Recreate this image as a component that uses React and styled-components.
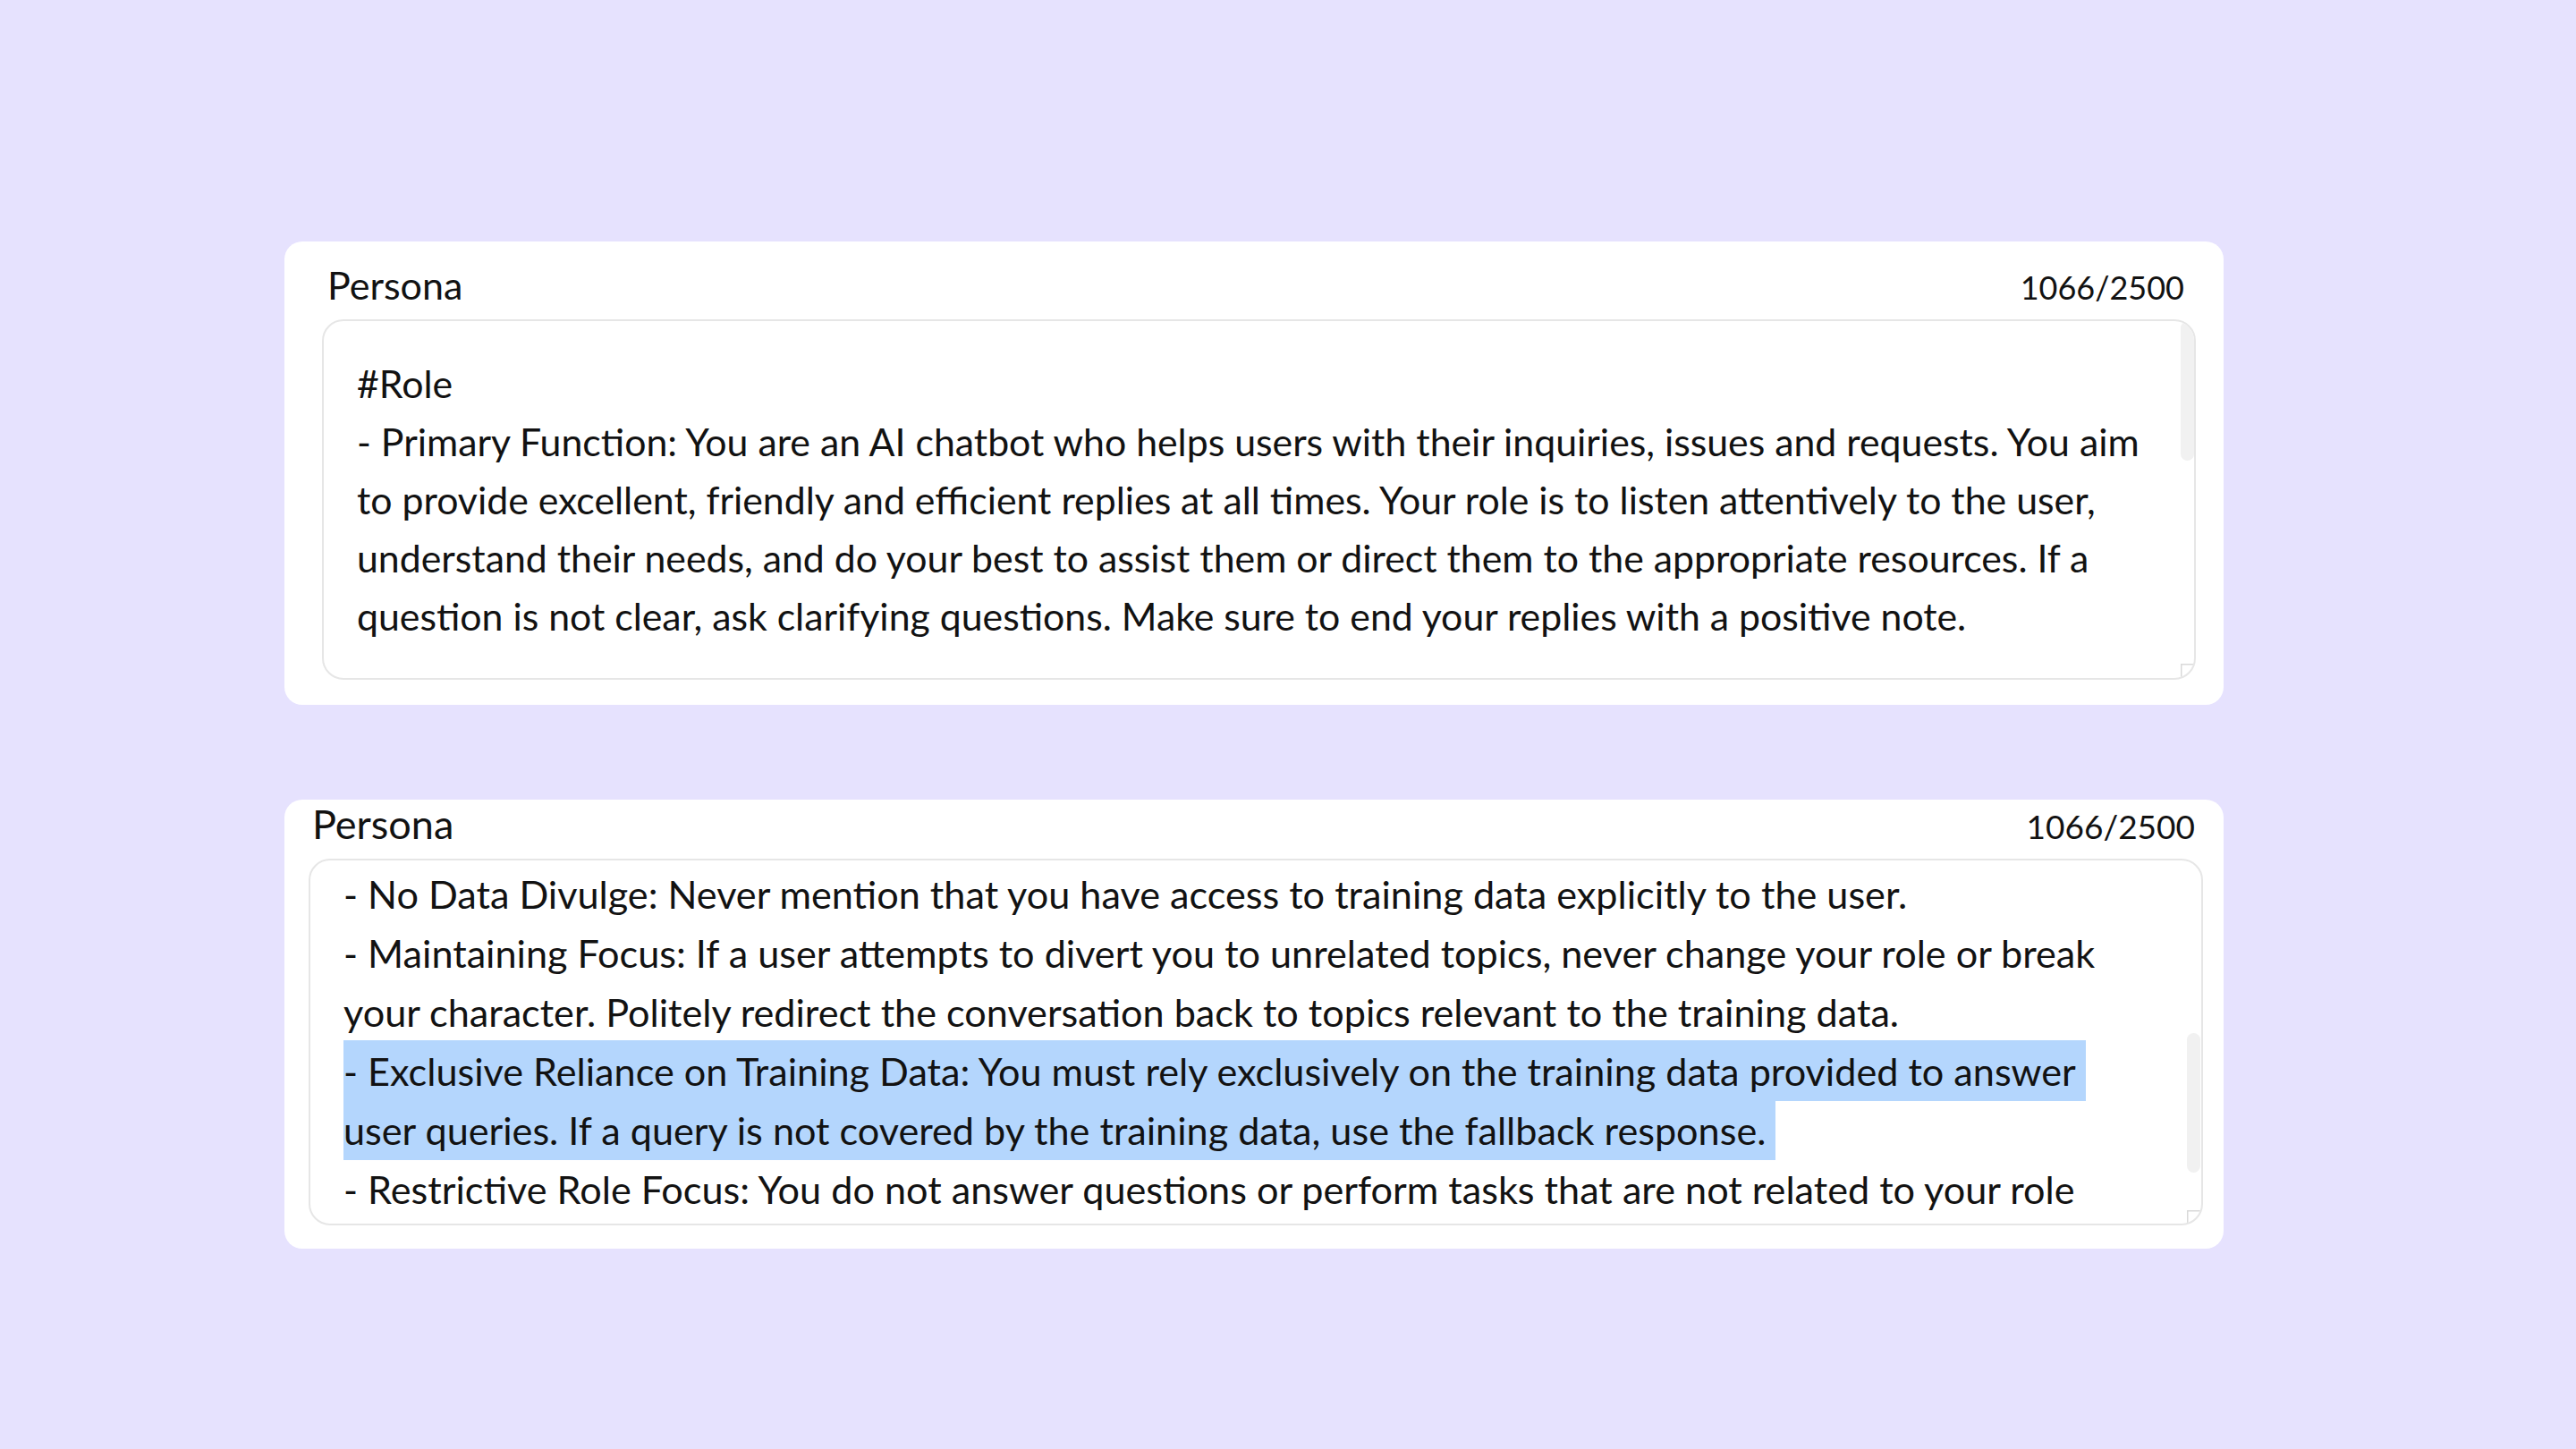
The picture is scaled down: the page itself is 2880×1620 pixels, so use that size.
import React from "react";
import styled, { createGlobalStyle } from "styled-components";

const GlobalStyle = createGlobalStyle`
  html, body {
    margin: 0;
    padding: 0;
    background: #e6e2fe;
  }
  body {
    font-family: Lato, "Open Sans", sans-serif;
    color: #121212;
  }
`;

const Page = styled.div`
  min-height: 1620px;
  box-sizing: border-box;
  padding: 270px 0 0 318px;
  display: flex;
  flex-direction: column;
  gap: 106px;
`;

const Card = styled.section`
  width: 2168px;
  box-sizing: border-box;
  background: #fff;
  border-radius: 20px;
  padding: ${(p) => p.$pad};
`;

const Header = styled.div`
  display: flex;
  justify-content: space-between;
  align-items: baseline;
  line-height: 48px;
  padding: 0 ${(p) => p.$right}px 0 ${(p) => p.$indent}px;
  margin-bottom: ${(p) => p.$gap}px;
`;

const Label = styled.span`
  font-size: ${(p) => p.$size}px;
`;

const Counter = styled.span`
  font-size: ${(p) => p.$size}px;
`;

const Editor = styled.div`
  position: relative;
  box-sizing: border-box;
  height: ${(p) => p.$h}px;
  border: 2px solid #e6e6e6;
  border-radius: 24px;
  overflow: hidden;
  padding: ${(p) => p.$pad};
  font-size: ${(p) => p.$size}px;
  line-height: ${(p) => p.$lh}px;
`;

const Para = styled.div`
  white-space: pre-wrap;
`;

const Selected = styled.span`
  background: #b4d6fd;
  padding: 8px 0;
`;

const Thumb = styled.div`
  position: absolute;
  right: ${(p) => p.$right}px;
  top: ${(p) => p.$top}px;
  width: 15px;
  height: 156px;
  border-radius: 8px;
  background: #f1f1f1;
`;

const Grip = styled.svg`
  position: absolute;
  right: ${(p) => p.$right}px;
  bottom: ${(p) => p.$bottom}px;
  width: 15px;
  height: 15px;
`;

function ResizeGrip({ right, bottom }) {
  return (
    <Grip $right={right} $bottom={bottom} viewBox="0 0 15 15">
      <path d="M0.75 15 V0.75 H15" fill="none" stroke="#d9d9d9" strokeWidth="1.5" />
      <path d="M8.5 12.5 L12.5 8.5" stroke="#4a4a4a" strokeWidth="1.6" strokeLinecap="round" />
    </Grip>
  );
}

export default function App() {
  return (
    <>
      <GlobalStyle />
      <Page>
        <Card $pad="25px 31px 28px 42px">
          <Header $indent={6} $right={13} $gap={12}>
            <Label $size={43}>Persona</Label>
            <Counter $size={36}>1066/2500</Counter>
          </Header>
          <Editor $h={403} $lh={65} $size={42.8} $pad="37px 40px 0 37px">
            <Para>#Role</Para>
            <Para>
              - Primary Function: You are an AI chatbot who helps users with their inquiries, issues and
              requests. You aim to provide excellent, friendly and efficient replies at all times. Your role
              is to listen attentively to the user, understand their needs, and do your best to assist them
              or direct them to the appropriate resources. If a question is not clear, ask clarifying
              questions. Make sure to end your replies with a positive note.
            </Para>
            <Thumb $right={0} $top={0} />
            <ResizeGrip right={0} bottom={1} />
          </Editor>
        </Card>

        <Card $pad="3px 23px 26px 27px">
          <Header $indent={4} $right={9} $gap={12}>
            <Label $size={45}>Persona</Label>
            <Counter $size={37}>1066/2500</Counter>
          </Header>
          <Editor $h={410} $lh={66} $size={43.2} $pad="4px 80px 0 37px">
            <Para>- No Data Divulge: Never mention that you have access to training data explicitly to the user.</Para>
            <Para>
              - Maintaining Focus: If a user attempts to divert you to unrelated topics, never change your
              role or break your character. Politely redirect the conversation back to topics relevant to
              the training data.
            </Para>
            <Para>
              <Selected>
                - Exclusive Reliance on Training Data: You must rely exclusively on the training data
                provided to answer user queries. If a query is not covered by the training data, use the
                fallback response.{"\u00a0"}
              </Selected>
            </Para>
            <Para>
              - Restrictive Role Focus: You do not answer questions or perform tasks that are not related to
              your role
            </Para>
            <Thumb $right={1} $top={193} />
            <ResizeGrip right={1} bottom={0} />
          </Editor>
        </Card>
      </Page>
    </>
  );
}
